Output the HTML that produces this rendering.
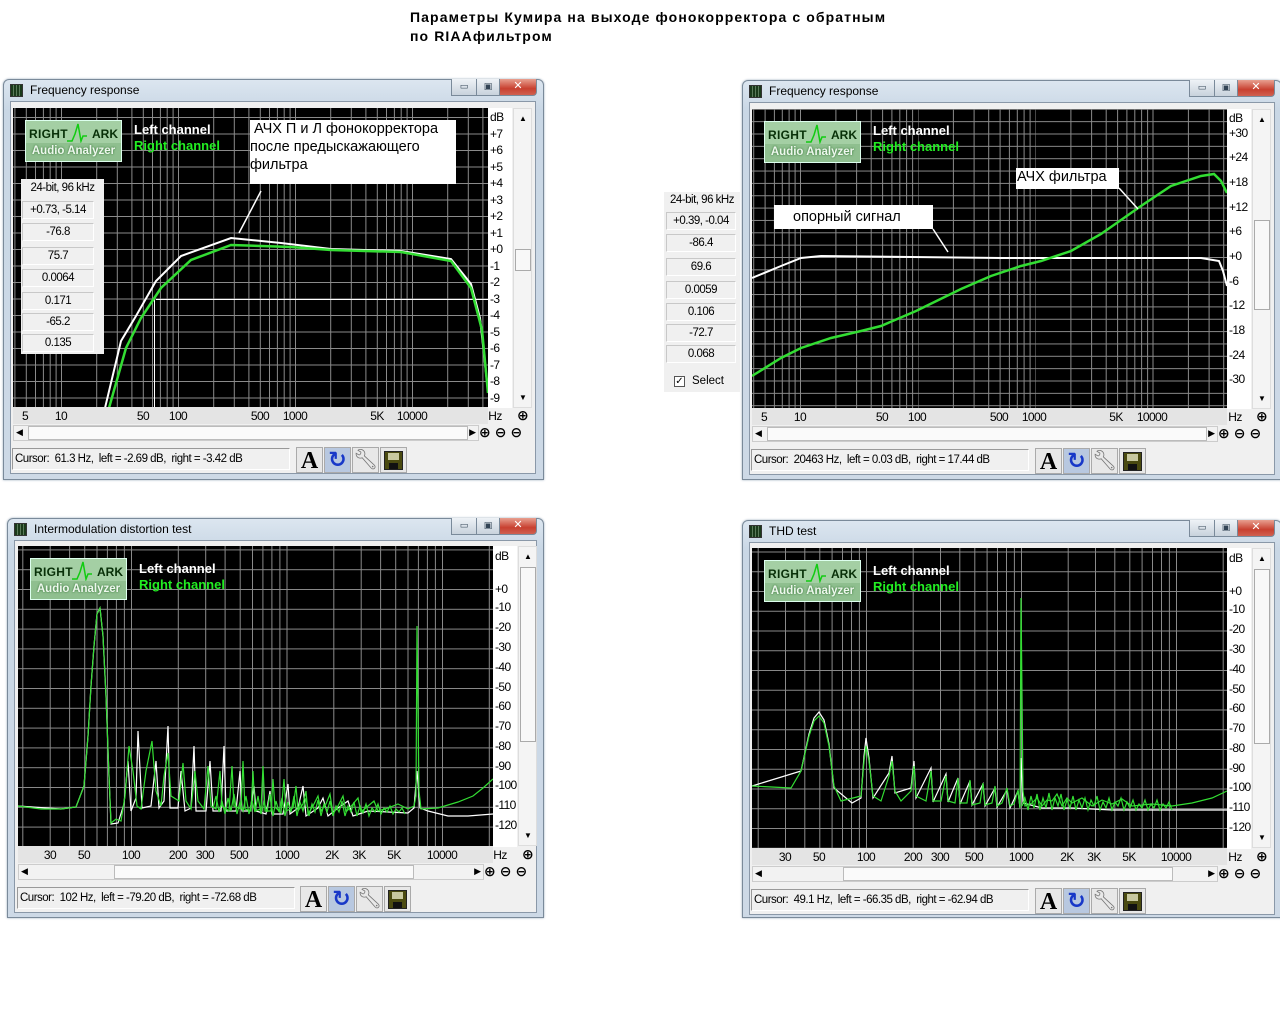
<!DOCTYPE html>
<html><head><meta charset="utf-8"><style>
*{margin:0;padding:0;box-sizing:border-box}
body{width:1280px;height:1024px;background:#fff;position:relative;overflow:hidden;font-family:"Liberation Sans","DejaVu Sans",sans-serif}
.a{position:absolute}
.win{position:absolute;width:540px;height:400px;background:linear-gradient(#dce6f0,#c9d7e5 30px,#cdd9e6);border:1px solid #7a8a9a;border-radius:6px 6px 0 0;box-shadow:0 0 2px #9ab}
.ttl{position:absolute;left:26px;top:3px;font-size:12px;color:#000}
.ico{position:absolute;left:6px;top:4px;width:13px;height:13px;background:repeating-linear-gradient(90deg,#1a3a1a 0 2px,#5a7a5a 2px 3px),#2a4;border:1px solid #333}
.btns{position:absolute;right:6px;top:-1px;width:86px;height:17px}
.bm,.bx{position:absolute;top:0;height:17px;border:1px solid #7a8a9a;border-top:none;background:linear-gradient(#eef2f6,#c8d2dc);font-size:9px;text-align:center;line-height:15px;color:#345}
.bx{background:linear-gradient(#e8a090,#c84030 60%,#d06050);border-radius:0 0 4px 0;color:#fff;font-size:11px;line-height:14px;font-weight:bold}
.cli{position:absolute;left:6px;top:21px;width:526px;height:373px;background:#f0f0f0;border:1px solid #8a98a8}
.plot{position:absolute;left:9px;top:28px;width:475px;height:300px;background:#000}
.yl{position:absolute;font-size:12px;color:#000;letter-spacing:-0.6px;line-height:12px}
.ycol{position:absolute;left:484px;top:28px;width:24px;height:300px;background:#fff}
.vs{position:absolute;left:509px;top:28px;width:19px;height:300px;background:#f4f4f4;border:1px solid #ddd}
.vs .th{position:absolute;left:1px;width:16px;height:22px;background:#f8f8f8;border:1px solid #aaa}
.xl{position:absolute;top:327px;left:9px;width:475px;height:17px;background:#e4e4e4}
.xt{position:absolute;top:329px;font-size:12px;letter-spacing:-0.6px;transform:translateX(-50%);color:#000}
.hs{position:absolute;left:9px;top:345px;width:466px;height:16px;background:#f2f2f2;border:1px solid #ccc}
.hs .th{position:absolute;top:0;height:14px;background:#fafafa;border:1px solid #bbb}
.st{position:absolute;left:8px;top:368px;width:278px;height:22px;border:1px solid #999;border-right-color:#fff;border-bottom-color:#fff;background:#f0f0f0;font-size:11.5px;line-height:20px;padding-left:2px;letter-spacing:-0.5px}
.tb{position:absolute;top:367px;width:27px;height:26px;border:1px solid #aaa;background:#e8e8e8}
.logo{position:absolute;left:12px;top:12px;width:97px;height:42px;background:#a4cfa4;border:1px solid #dfe;}
.logo .r{position:absolute;left:3px;top:6px;font-size:12px;font-weight:bold;color:#083008;letter-spacing:0.3px}
.logo .k{position:absolute;right:3px;top:6px;font-size:12px;font-weight:bold;color:#083008}
.logo .aa{position:absolute;left:0;top:22px;width:95px;height:18px;background:#8fbf8f;color:#eef8ee;font-size:11.5px;font-weight:bold;text-align:center;line-height:17px;text-shadow:0 0 2px #2a6a2a}
.lc{position:absolute;font-size:13px;font-weight:bold;color:#fff;line-height:16px}
.rc{color:#22ee22}
.ann{position:absolute;background:#fff;color:#000;font-size:14.5px;line-height:18px}
.panel{position:absolute;background:#f0f0f0}
.vb{position:absolute;height:18px;border:1px solid #c8c8c8;border-right-color:#fff;border-bottom-color:#fff;font-size:11.5px;text-align:center;line-height:16px;letter-spacing:-0.5px}
</style></head><body>

<div class="a" style="left:410px;top:8px;font-size:14px;font-weight:bold;line-height:19px;letter-spacing:1.1px">Параметры Кумира на выходе фонокорректора с обратным<br>по RIAAфильтром</div>

<!-- ============ WINDOW TL ============ -->
<div class="win" style="left:3px;top:79px;width:541px;height:401px">
 <div class="ico"></div><div class="ttl">Frequency response</div>
 <div class="btns"><div class="bm" style="left:0;width:26px">▭</div><div class="bm" style="left:25px;width:24px">▣</div><div class="bx" style="left:48px;width:38px">✕</div></div>
 <div class="cli"></div>
 <div class="plot"><svg width="475" height="300">
  <defs><pattern id="g1" patternUnits="userSpaceOnUse" x="48" y="141" width="117" height="16.5"><g stroke="#8a8a8a" stroke-width="1"><path d="M0.5 0V16.5M35.7 0V16.5M56.3 0V16.5M70.9 0V16.5M82.3 0V16.5M91.5 0V16.5M99.4 0V16.5M106.2 0V16.5M112.1 0V16.5M0 0.5H117"/></g></pattern></defs>
  <rect width="475" height="300" fill="url(#g1)"/>
  <path d="M143 191.5H475M141.5 191V300" stroke="#fff" stroke-width="1"/>
  <polyline fill="none" stroke="#fff" stroke-width="2" points="92,300 108,233 123,208 143,173 168,148 218,130 268,135 318,141 388,143 438,151 458,176 467,210 475,283"/>
  <polyline fill="none" stroke="#33dd33" stroke-width="2.5" points="96,300 113,240 128,210 148,180 178,152 218,137 278,139 318,142 388,144 438,153 458,180 469,222 475,285"/>
  <path d="M226 125L248 83" stroke="#fff" stroke-width="1.5"/>
 </svg>
  <div class="logo"><span class="r">RIGHT</span><svg class="a" style="left:41px;top:1px" width="20" height="22"><polyline fill="none" stroke="#1c1" stroke-width="1.5" points="0,19 5,19 8,12 11,2 14,19 16,14 20,14"/></svg><span class="k">ARK</span><div class="aa">Audio Analyzer</div></div>
  <div class="lc" style="left:121px;top:14px">Left channel<br><span class="rc">Right channel</span></div>
  <div class="ann" style="left:237px;top:12px;width:206px;height:64px;padding-left:0px">&nbsp;АЧХ П и Л фонокорректора<br>после предыскажающего<br>фильтра</div>
  <div class="panel" style="left:8px;top:71px;width:83px;height:175px">
   <div class="vb" style="left:0;top:1px;width:83px;border:none">24-bit, 96 kHz</div>
   <div class="vb" style="left:1px;top:22px;width:72px">+0.73, -5.14</div>
   <div class="vb" style="left:1px;top:44px;width:72px">-76.8</div>
   <div class="vb" style="left:1px;top:68px;width:72px">75.7</div>
   <div class="vb" style="left:1px;top:90px;width:72px">0.0064</div>
   <div class="vb" style="left:1px;top:113px;width:72px">0.171</div>
   <div class="vb" style="left:1px;top:134px;width:72px">-65.2</div>
   <div class="vb" style="left:1px;top:155px;width:72px">0.135</div>
  </div>
 </div>
 <div class="ycol"></div>
 <div class="yl" style="left:486px;top:31px">dB</div>
 <div class="yl" style="left:486px;top:48px">+7</div><div class="yl" style="left:486px;top:64px">+6</div><div class="yl" style="left:486px;top:81px">+5</div><div class="yl" style="left:486px;top:97px">+4</div><div class="yl" style="left:486px;top:114px">+3</div><div class="yl" style="left:486px;top:130px">+2</div><div class="yl" style="left:486px;top:147px">+1</div><div class="yl" style="left:486px;top:163px">+0</div><div class="yl" style="left:486px;top:180px">-1</div><div class="yl" style="left:486px;top:196px">-2</div><div class="yl" style="left:486px;top:213px">-3</div><div class="yl" style="left:486px;top:229px">-4</div><div class="yl" style="left:486px;top:246px">-5</div><div class="yl" style="left:486px;top:262px">-6</div><div class="yl" style="left:486px;top:279px">-7</div><div class="yl" style="left:486px;top:295px">-8</div><div class="yl" style="left:486px;top:312px">-9</div>
 <div class="vs"><div class="a" style="left:5px;top:5px;font-size:8px">▲</div><div class="th" style="top:140px"></div><div class="a" style="left:5px;top:284px;font-size:8px">▼</div></div>
 <div class="xl"></div>
 <div class="xt" style="left:21px">5</div><div class="xt" style="left:57px">10</div><div class="xt" style="left:139px">50</div><div class="xt" style="left:174px">100</div><div class="xt" style="left:256px">500</div><div class="xt" style="left:291px">1000</div><div class="xt" style="left:373px">5K</div><div class="xt" style="left:408px">10000</div><div class="xt" style="left:491px">Hz</div>
 <div class="a" style="left:513px;top:327px;font-size:14px;font-weight:bold">⊕</div>
 <div class="hs"><div class="a" style="left:2px;top:1px;font-size:9px">◀</div><div class="th" style="left:14px;width:440px"></div><div class="a" style="right:2px;top:1px;font-size:9px">▶</div></div>
 <div class="a" style="left:475px;top:344px;font-size:14px;font-weight:bold;letter-spacing:4px">⊕⊖⊖</div>
 <div class="st">Cursor:&nbsp; 61.3 Hz,&nbsp; left = -2.69 dB,&nbsp; right = -3.42 dB</div>
 <div class="tb" style="left:292px;font-family:'Liberation Serif';font-size:24px;font-weight:bold;text-align:center;line-height:26px">A</div>
 <div class="tb" style="left:320px;background:#b8c8e0;color:#1838c8;font-size:22px;text-align:center;line-height:24px;font-weight:bold">↻</div>
 <div class="tb" style="left:348px;color:#777;font-size:20px;text-align:center;line-height:24px">🔧︎</div>
 <div class="tb" style="left:376px"><div class="a" style="left:3px;top:3px;width:19px;height:19px;background:#4a4a10;border:1px solid #222"><div class="a" style="left:3px;top:1px;width:11px;height:7px;background:#c8c8a0"></div><div class="a" style="left:4px;top:11px;width:9px;height:6px;background:#111"></div></div></div>
</div>

<!-- ============ WINDOW TR ============ -->
<div class="panel" style="left:664px;top:192px;width:76px;height:200px">
 <div class="vb" style="left:0;top:0;width:76px;border:none">24-bit, 96 kHz</div>
 <div class="vb" style="left:2px;top:20px;width:70px">+0.39, -0.04</div>
 <div class="vb" style="left:2px;top:42px;width:70px">-86.4</div>
 <div class="vb" style="left:2px;top:66px;width:70px">69.6</div>
 <div class="vb" style="left:2px;top:89px;width:70px">0.0059</div>
 <div class="vb" style="left:2px;top:111px;width:70px">0.106</div>
 <div class="vb" style="left:2px;top:132px;width:70px">-72.7</div>
 <div class="vb" style="left:2px;top:153px;width:70px">0.068</div>
 <div class="a" style="left:10px;top:184px;width:11px;height:11px;border:1px solid #555;background:#fff;font-size:10px;line-height:9px;text-align:center">✓</div>
 <div class="a" style="left:28px;top:183px;font-size:11.5px">Select</div>
</div>
<div class="win" style="left:742px;top:80px;width:540px;height:400px">
 <div class="ico"></div><div class="ttl">Frequency response</div>
 <div class="btns"><div class="bm" style="left:0;width:26px">▭</div><div class="bm" style="left:25px;width:24px">▣</div><div class="bx" style="left:48px;width:38px">✕</div></div>
 <div class="cli"></div>
 <div class="plot"><svg width="475" height="300">
  <defs><pattern id="g2" patternUnits="userSpaceOnUse" x="48" y="148" width="117.5" height="12.35"><g stroke="#8a8a8a" stroke-width="1"><path d="M0.5 0V13M35.9 0V13M56.6 0V13M71.2 0V13M82.6 0V13M91.9 0V13M99.8 0V13M106.6 0V13M112.6 0V13M0 0.5H118"/></g></pattern></defs>
  <rect width="475" height="300" fill="url(#g2)"/>
  <polyline fill="none" stroke="#fff" stroke-width="2" points="0,169 29,157 49,149 69,147 249,149 449,149 467,152 471,162 475,177"/>
  <polyline fill="none" stroke="#33dd33" stroke-width="2.5" points="0,267 29,249 49,239 79,229 109,222 129,217 164,202 209,180 239,167 269,157 289,152 319,142 349,125 389,97 419,77 449,67 462,65 469,72 475,84"/>
  <path d="M367 79L386 100M181 120L196 143" stroke="#fff" stroke-width="1.5"/>
 </svg>
  <div class="logo"><span class="r">RIGHT</span><svg class="a" style="left:41px;top:1px" width="20" height="22"><polyline fill="none" stroke="#1c1" stroke-width="1.5" points="0,19 5,19 8,12 11,2 14,19 16,14 20,14"/></svg><span class="k">ARK</span><div class="aa">Audio Analyzer</div></div>
  <div class="lc" style="left:121px;top:14px">Left channel<br><span class="rc">Right channel</span></div>
  <div class="ann" style="left:264px;top:59px;width:103px;height:21px;padding-left:1px">АЧХ фильтра</div>
  <div class="ann" style="left:22px;top:96px;width:159px;height:24px;padding:3px 0 0 19px">опорный сигнал</div>
 </div>
 <div class="ycol"></div>
 <div class="yl" style="left:486px;top:31px">dB</div>
 <div class="yl" style="left:486px;top:46px">+30</div><div class="yl" style="left:486px;top:70px">+24</div><div class="yl" style="left:486px;top:95px">+18</div><div class="yl" style="left:486px;top:120px">+12</div><div class="yl" style="left:486px;top:144px">+6</div><div class="yl" style="left:486px;top:169px">+0</div><div class="yl" style="left:486px;top:194px">-6</div><div class="yl" style="left:486px;top:218px">-12</div><div class="yl" style="left:486px;top:243px">-18</div><div class="yl" style="left:486px;top:268px">-24</div><div class="yl" style="left:486px;top:292px">-30</div>
 <div class="vs"><div class="a" style="left:5px;top:5px;font-size:8px">▲</div><div class="th" style="top:110px;height:90px"></div><div class="a" style="left:5px;top:284px;font-size:8px">▼</div></div>
 <div class="xl"></div>
 <div class="xt" style="left:21px">5</div><div class="xt" style="left:57px">10</div><div class="xt" style="left:139px">50</div><div class="xt" style="left:174px">100</div><div class="xt" style="left:256px">500</div><div class="xt" style="left:291px">1000</div><div class="xt" style="left:373px">5K</div><div class="xt" style="left:409px">10000</div><div class="xt" style="left:492px">Hz</div>
 <div class="a" style="left:513px;top:327px;font-size:14px;font-weight:bold">⊕</div>
 <div class="hs"><div class="a" style="left:2px;top:1px;font-size:9px">◀</div><div class="th" style="left:14px;width:440px"></div><div class="a" style="right:2px;top:1px;font-size:9px">▶</div></div>
 <div class="a" style="left:475px;top:344px;font-size:14px;font-weight:bold;letter-spacing:4px">⊕⊖⊖</div>
 <div class="st">Cursor:&nbsp; 20463 Hz,&nbsp; left = 0.03 dB,&nbsp; right = 17.44 dB</div>
 <div class="tb" style="left:292px;font-family:'Liberation Serif';font-size:24px;font-weight:bold;text-align:center;line-height:26px">A</div>
 <div class="tb" style="left:320px;background:#b8c8e0;color:#1838c8;font-size:22px;text-align:center;line-height:24px;font-weight:bold">↻</div>
 <div class="tb" style="left:348px;color:#777;font-size:20px;text-align:center;line-height:24px">🔧︎</div>
 <div class="tb" style="left:376px"><div class="a" style="left:3px;top:3px;width:19px;height:19px;background:#4a4a10;border:1px solid #222"><div class="a" style="left:3px;top:1px;width:11px;height:7px;background:#c8c8a0"></div><div class="a" style="left:4px;top:11px;width:9px;height:6px;background:#111"></div></div></div>
</div>

<!-- ============ WINDOW BL ============ -->
<div class="win" style="left:7px;top:518px;width:537px;height:400px">
 <div class="ico"></div><div class="ttl">Intermodulation distortion test</div>
 <div class="btns"><div class="bm" style="left:0;width:26px">▭</div><div class="bm" style="left:25px;width:24px">▣</div><div class="bx" style="left:48px;width:38px">✕</div></div>
 <div class="cli" style="width:523px"></div>
 <div class="plot" style="left:10px;top:27px"><svg width="475" height="301">
  <defs><pattern id="g3" patternUnits="userSpaceOnUse" x="113" y="43" width="155.5" height="19.8"><g stroke="#8a8a8a" stroke-width="1"><path d="M0.5 0V20M47.3 0V20M74.7 0V20M94.1 0V20M109.2 0V20M121.5 0V20M131.9 0V20M140.9 0V20M148.9 0V20M0 0.5H156"/></g></pattern></defs>
  <rect width="475" height="301" fill="url(#g3)"/>
  <polyline fill="none" stroke="#fff" stroke-width="1.2" points="0,260 43,263 58,261 66,240 70,190 73,140 76,100 79,68 82,62 85,90 88,150 91,230 93,278 100,277 106,258 110,215 113,265 118,252 120,185 124,262 133,260 138,215 141,262 146,255 150,180 152,262 160,262 163,225 167,265 173,262 176,200 178,265 188,265 192,215 195,265 203,265 206,200 208,265 218,265 222,225 224,265 232,265 236,240 238,265 248,268 252,245 254,268 265,268 270,238 272,268 280,262 285,240 288,270 300,262 305,252 310,270 320,262 330,255 335,270 350,265 370,266 390,267 396,262 399,225 402,262 410,265 430,270 450,270 475,268"/>
  <polyline fill="none" stroke="#33dd33" stroke-width="1.2" points="195,262 198,250 201,266 204,255 207,268 210,252 213,265 216,248 219,268 222,256 225,265 228,250 231,268 234,255 237,266 240,250 243,268 246,256 249,266 252,248 255,270 258,255 261,266 264,252 267,270 270,256 273,266 276,250 279,270 282,256 285,265 288,252 291,270 294,258 297,266 300,254 303,270 306,258 309,266 312,255 315,270 318,260 321,266 324,255 327,270 330,260 333,266 336,256 339,270 342,260 345,267 348,258 351,270 354,262 357,266 360,258 363,268 366,262 369,266 372,260 375,268 378,263 381,266 384,262 387,268"/>
  <polyline fill="none" stroke="#33dd33" stroke-width="1.2" points="0,260 23,263 43,263 58,261 66,240 70,190 73,140 76,100 79,68 82,62 85,90 88,150 91,230 93,277 98,273 103,275 107,250 111,200 115,225 119,260 123,263 128,225 134,195 138,245 143,260 146,230 150,207 153,250 161,255 165,217 168,255 173,263 177,225 180,255 186,263 190,220 193,260 198,263 202,225 204,260 211,265 214,220 216,260 223,263 225,215 227,263 233,265 235,225 237,265 243,263 245,220 247,265 253,265 255,233 257,261 263,267 266,233 268,265 275,262 278,240 280,265 285,258 288,245 290,268 295,260 300,250 303,265 308,258 312,248 315,268 320,260 325,250 328,266 335,258 340,252 343,266 350,260 356,255 360,265 370,262 380,258 390,263 396,260 398,250 399,80 401,245 403,263 420,262 440,256 455,250 465,242 475,233"/>
 </svg>
  <div class="logo"><span class="r">RIGHT</span><svg class="a" style="left:41px;top:1px" width="20" height="22"><polyline fill="none" stroke="#1c1" stroke-width="1.5" points="0,19 5,19 8,12 11,2 14,19 16,14 20,14"/></svg><span class="k">ARK</span><div class="aa">Audio Analyzer</div></div>
  <div class="lc" style="left:121px;top:15px">Left channel<br><span class="rc">Right channel</span></div>
 </div>
 <div class="ycol" style="left:485px;top:27px;height:301px"></div>
 <div class="yl" style="left:487px;top:31px">dB</div>
 <div class="yl" style="left:487px;top:64px">+0</div><div class="yl" style="left:487px;top:82px">-10</div><div class="yl" style="left:487px;top:102px">-20</div><div class="yl" style="left:487px;top:122px">-30</div><div class="yl" style="left:487px;top:142px">-40</div><div class="yl" style="left:487px;top:162px">-50</div><div class="yl" style="left:487px;top:181px">-60</div><div class="yl" style="left:487px;top:201px">-70</div><div class="yl" style="left:487px;top:221px">-80</div><div class="yl" style="left:487px;top:241px">-90</div><div class="yl" style="left:487px;top:260px">-100</div><div class="yl" style="left:487px;top:280px">-110</div><div class="yl" style="left:487px;top:300px">-120</div>
 <div class="vs" style="left:510px;top:27px"><div class="a" style="left:5px;top:5px;font-size:8px">▲</div><div class="th" style="top:20px;height:175px"></div><div class="a" style="left:5px;top:284px;font-size:8px">▼</div></div>
 <div class="xl" style="left:10px"></div>
 <div class="xt" style="left:42px">30</div><div class="xt" style="left:76px">50</div><div class="xt" style="left:123px">100</div><div class="xt" style="left:170px">200</div><div class="xt" style="left:197px">300</div><div class="xt" style="left:231px">500</div><div class="xt" style="left:279px">1000</div><div class="xt" style="left:324px">2K</div><div class="xt" style="left:351px">3K</div><div class="xt" style="left:386px">5K</div><div class="xt" style="left:434px">10000</div><div class="xt" style="left:492px">Hz</div>
 <div class="a" style="left:514px;top:327px;font-size:14px;font-weight:bold">⊕</div>
 <div class="hs" style="left:10px"><div class="a" style="left:2px;top:1px;font-size:9px">◀</div><div class="th" style="left:95px;width:300px"></div><div class="a" style="right:2px;top:1px;font-size:9px">▶</div></div>
 <div class="a" style="left:476px;top:344px;font-size:14px;font-weight:bold;letter-spacing:4px">⊕⊖⊖</div>
 <div class="st" style="left:9px">Cursor:&nbsp; 102 Hz,&nbsp; left = -79.20 dB,&nbsp; right = -72.68 dB</div>
 <div class="tb" style="left:292px;font-family:'Liberation Serif';font-size:24px;font-weight:bold;text-align:center;line-height:26px">A</div>
 <div class="tb" style="left:320px;background:#b8c8e0;color:#1838c8;font-size:22px;text-align:center;line-height:24px;font-weight:bold">↻</div>
 <div class="tb" style="left:348px;color:#777;font-size:20px;text-align:center;line-height:24px">🔧︎</div>
 <div class="tb" style="left:376px"><div class="a" style="left:3px;top:3px;width:19px;height:19px;background:#4a4a10;border:1px solid #222"><div class="a" style="left:3px;top:1px;width:11px;height:7px;background:#c8c8a0"></div><div class="a" style="left:4px;top:11px;width:9px;height:6px;background:#111"></div></div></div>
</div>

<!-- ============ WINDOW BR ============ -->
<div class="win" style="left:742px;top:520px;width:540px;height:398px">
 <div class="ico"></div><div class="ttl">THD test</div>
 <div class="btns"><div class="bm" style="left:0;width:26px">▭</div><div class="bm" style="left:25px;width:24px">▣</div><div class="bx" style="left:48px;width:38px">✕</div></div>
 <div class="cli"></div>
 <div class="plot" style="top:27px"><svg width="475" height="301">
  <defs><pattern id="g4" patternUnits="userSpaceOnUse" x="114" y="43" width="155" height="19.75"><g stroke="#8a8a8a" stroke-width="1"><path d="M0.5 0V20M47.2 0V20M74.5 0V20M93.8 0V20M108.8 0V20M121.1 0V20M131.5 0V20M140.5 0V20M148.4 0V20M0 0.5H155"/></g></pattern></defs>
  <rect width="475" height="301" fill="url(#g4)"/>
  <polyline fill="none" stroke="#fff" stroke-width="1.2" points="0,238 49,223 57,186 62,170 67,164 72,172 77,196 82,240 100,255 109,250 112,208 114,190 117,210 121,250 137,225 140,208 143,245 159,240 162,213 164,250 179,220 181,254 194,226 196,254 206,230 208,256 218,233 220,257 231,236 233,258 243,240 245,259 255,242 258,260 266,243 268,260 269,210 271,255 290,260 320,260 360,262 400,262 440,262 475,262"/>
  <polyline fill="none" stroke="#33dd33" stroke-width="1.2" points="270,258 273,250 276,262 279,248 282,260 285,246 288,262 291,250 294,260 297,245 300,262 303,250 306,258 309,246 312,262 315,252 318,260 321,248 324,262 327,252 330,260 333,250 336,262 339,252 342,258 345,248 348,262 351,254 354,260 357,250 360,262 363,254 366,258 369,250 372,262 375,254 378,260 381,252 384,262 387,256 390,260 393,252 396,262 399,256 402,260 405,252 408,262 411,256 414,260 417,254 420,262"/>
  <polyline fill="none" stroke="#33dd33" stroke-width="1.2" points="0,238 39,240 49,223 57,188 62,173 67,168 72,175 77,198 82,238 89,253 109,248 112,213 114,198 117,213 121,248 129,253 137,228 140,213 143,243 149,253 159,243 162,218 164,248 174,253 179,223 181,253 189,253 194,228 196,253 203,255 206,230 208,255 215,255 218,232 220,257 228,255 231,235 233,257 240,255 243,238 245,258 250,255 255,240 258,258 262,256 266,242 268,260 269,50 271,243 273,258 280,255 285,250 290,258 295,252 300,253 305,246 310,258 315,250 320,255 330,250 340,258 350,252 360,256 370,251 380,258 400,256 420,258 440,255 460,250 475,243"/>
 </svg>
  <div class="logo"><span class="r">RIGHT</span><svg class="a" style="left:41px;top:1px" width="20" height="22"><polyline fill="none" stroke="#1c1" stroke-width="1.5" points="0,19 5,19 8,12 11,2 14,19 16,14 20,14"/></svg><span class="k">ARK</span><div class="aa">Audio Analyzer</div></div>
  <div class="lc" style="left:121px;top:15px">Left channel<br><span class="rc">Right channel</span></div>
 </div>
 <div class="ycol" style="top:27px;height:301px"></div>
 <div class="yl" style="left:486px;top:31px">dB</div>
 <div class="yl" style="left:486px;top:64px">+0</div><div class="yl" style="left:486px;top:82px">-10</div><div class="yl" style="left:486px;top:102px">-20</div><div class="yl" style="left:486px;top:122px">-30</div><div class="yl" style="left:486px;top:142px">-40</div><div class="yl" style="left:486px;top:162px">-50</div><div class="yl" style="left:486px;top:181px">-60</div><div class="yl" style="left:486px;top:201px">-70</div><div class="yl" style="left:486px;top:221px">-80</div><div class="yl" style="left:486px;top:241px">-90</div><div class="yl" style="left:486px;top:260px">-100</div><div class="yl" style="left:486px;top:280px">-110</div><div class="yl" style="left:486px;top:300px">-120</div>
 <div class="vs" style="top:27px"><div class="a" style="left:5px;top:5px;font-size:8px">▲</div><div class="th" style="top:20px;height:175px"></div><div class="a" style="left:5px;top:284px;font-size:8px">▼</div></div>
 <div class="xl"></div>
 <div class="xt" style="left:42px">30</div><div class="xt" style="left:76px">50</div><div class="xt" style="left:123px">100</div><div class="xt" style="left:170px">200</div><div class="xt" style="left:197px">300</div><div class="xt" style="left:231px">500</div><div class="xt" style="left:278px">1000</div><div class="xt" style="left:324px">2K</div><div class="xt" style="left:351px">3K</div><div class="xt" style="left:386px">5K</div><div class="xt" style="left:433px">10000</div><div class="xt" style="left:492px">Hz</div>
 <div class="a" style="left:513px;top:327px;font-size:14px;font-weight:bold">⊕</div>
 <div class="hs"><div class="a" style="left:2px;top:1px;font-size:9px">◀</div><div class="th" style="left:90px;width:330px"></div><div class="a" style="right:2px;top:1px;font-size:9px">▶</div></div>
 <div class="a" style="left:475px;top:344px;font-size:14px;font-weight:bold;letter-spacing:4px">⊕⊖⊖</div>
 <div class="st">Cursor:&nbsp; 49.1 Hz,&nbsp; left = -66.35 dB,&nbsp; right = -62.94 dB</div>
 <div class="tb" style="left:292px;font-family:'Liberation Serif';font-size:24px;font-weight:bold;text-align:center;line-height:26px">A</div>
 <div class="tb" style="left:320px;background:#b8c8e0;color:#1838c8;font-size:22px;text-align:center;line-height:24px;font-weight:bold">↻</div>
 <div class="tb" style="left:348px;color:#777;font-size:20px;text-align:center;line-height:24px">🔧︎</div>
 <div class="tb" style="left:376px"><div class="a" style="left:3px;top:3px;width:19px;height:19px;background:#4a4a10;border:1px solid #222"><div class="a" style="left:3px;top:1px;width:11px;height:7px;background:#c8c8a0"></div><div class="a" style="left:4px;top:11px;width:9px;height:6px;background:#111"></div></div></div>
</div>

</body></html>
